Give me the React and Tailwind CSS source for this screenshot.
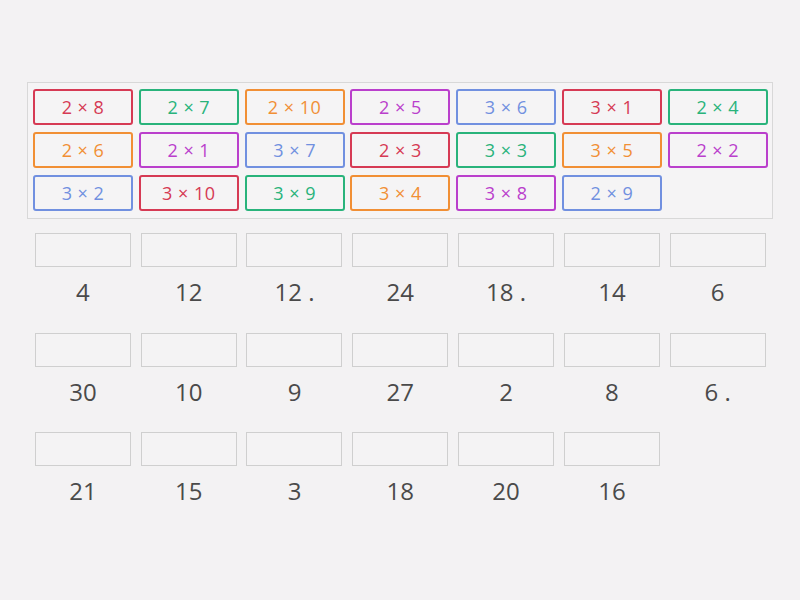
import React from "react";

const tiles = [
  { t: "2 × 8", c: "red" },
  { t: "2 × 7", c: "green" },
  { t: "2 × 10", c: "orange" },
  { t: "2 × 5", c: "purple" },
  { t: "3 × 6", c: "blue" },
  { t: "3 × 1", c: "red" },
  { t: "2 × 4", c: "green" },
  { t: "2 × 6", c: "orange" },
  { t: "2 × 1", c: "purple" },
  { t: "3 × 7", c: "blue" },
  { t: "2 × 3", c: "red" },
  { t: "3 × 3", c: "green" },
  { t: "3 × 5", c: "orange" },
  { t: "2 × 2", c: "purple" },
  { t: "3 × 2", c: "blue" },
  { t: "3 × 10", c: "red" },
  { t: "3 × 9", c: "green" },
  { t: "3 × 4", c: "orange" },
  { t: "3 × 8", c: "purple" },
  { t: "2 × 9", c: "blue" },
];

const colors = {
  red: "border-[#d63a54] text-[#d63a54]",
  green: "border-[#29b37b] text-[#29b37b]",
  orange: "border-[#f18f35] text-[#f18f35]",
  purple: "border-[#ba3fcc] text-[#ba3fcc]",
  blue: "border-[#7190e0] text-[#7190e0]",
};

const answers = [
  "4", "12", "12 .", "24", "18 .", "14", "6",
  "30", "10", "9", "27", "2", "8", "6 .",
  "21", "15", "3", "18", "20", "16",
];

export default function App() {
  return (
    <div className="w-[800px] h-[600px] bg-[#f3f2f3] font-['Open_Sans',sans-serif] pt-[82px] pl-[27px]">
      {/* tiles */}
      <div className="w-[746px] h-[137px] border border-[#d8d8d8] bg-[#f5f4f5] pl-[5px] pt-[6px]">
        <div className="grid grid-cols-[repeat(7,100px)] gap-x-[5.8px] gap-y-[7px]">
          {tiles.map((tile, i) => (
            <div
              key={i}
              className={`h-[36px] border-2 rounded-[3px] flex items-center justify-center text-[18px] tracking-[0.5px] ${colors[tile.c]}`}
            >
              {tile.t}
            </div>
          ))}
        </div>
      </div>

      {/* answers */}
      <div className="grid grid-cols-[repeat(7,105.8px)] mt-[14px] ml-[3px]">
        {answers.map((a, i) => (
          <div key={i} className="h-[99.5px] flex flex-col items-center">
            <div className="w-[96px] h-[34px] border border-[#cfcfcf] bg-[#f4f3f4]" />
            <div className="mt-[10px] h-[30px] leading-[30px] text-[24px] text-[#4a4a4a]">
              {a}
            </div>
          </div>
        ))}
      </div>
    </div>
  );
}
